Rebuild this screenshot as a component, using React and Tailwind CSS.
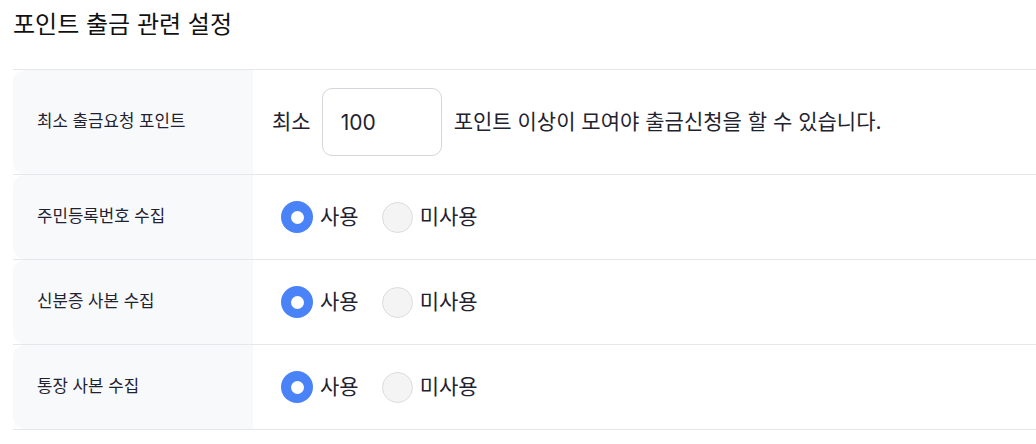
import { useState } from "react";

const font = { fontFamily: '"Inter", "Noto Sans CJK KR", sans-serif' };

function Radio({ checked, label, onClick }) {
  return (
    <button type="button" onClick={onClick} className="flex items-center gap-[7px]">
      {checked ? (
        <span className="w-[32px] h-[32px] rounded-full bg-[#4a82f7] flex items-center justify-center">
          <span className="w-[13px] h-[13px] rounded-full bg-white" />
        </span>
      ) : (
        <span className="w-[31px] h-[31px] rounded-full bg-[#f4f4f5] border border-[#dcdcdf]" />
      )}
      <span className="text-[21px] text-[#1f2330]">{label}</span>
    </button>
  );
}

function Row({ label, children, tall }) {
  return (
    <div className={`flex border-b border-[#e5e7eb] ${tall ? "h-[105px]" : "h-[85px]"}`}>
      <div className="w-[240px] shrink-0 bg-[#f8f9fb] rounded-l-xl flex items-center pl-[24px] text-[16.8px] text-[#1f2330]">
        {label}
      </div>
      <div className="flex-1 flex items-center pl-[19px]">{children}</div>
    </div>
  );
}

function UseToggle() {
  const [on, setOn] = useState(true);
  return (
    <div className="flex items-center gap-[23px] pl-[9px]">
      <Radio checked={on} label="사용" onClick={() => setOn(true)} />
      <Radio checked={!on} label="미사용" onClick={() => setOn(false)} />
    </div>
  );
}

export default function App() {
  const [min, setMin] = useState("100");
  return (
    <div className="bg-white w-[1036px] h-[444px] pl-[13px] overflow-hidden" style={font}>
      <h2 className="text-[24px] font-normal text-[#111] pt-[7px] h-[69px]">
        포인트 출금 관련 설정
      </h2>
      <div className="border-t border-[#e5e7eb]">
        <Row label="최소 출금요청 포인트" tall>
          <span className="text-[21px] text-[#1f2330]">최소</span>
          <input
            value={min}
            onChange={(e) => setMin(e.target.value)}
            className="ml-[11px] mr-[12px] w-[120px] h-[68px] rounded-[10px] border border-[#d4d6dc] pl-[18px] text-[21px] text-[#1f2330] outline-none"
          />
          <span className="text-[21px] text-[#1f2330]">
            포인트 이상이 모여야 출금신청을 할 수 있습니다.
          </span>
        </Row>
        <Row label="주민등록번호 수집">
          <UseToggle />
        </Row>
        <Row label="신분증 사본 수집">
          <UseToggle />
        </Row>
        <Row label="통장 사본 수집">
          <UseToggle />
        </Row>
      </div>
    </div>
  );
}
